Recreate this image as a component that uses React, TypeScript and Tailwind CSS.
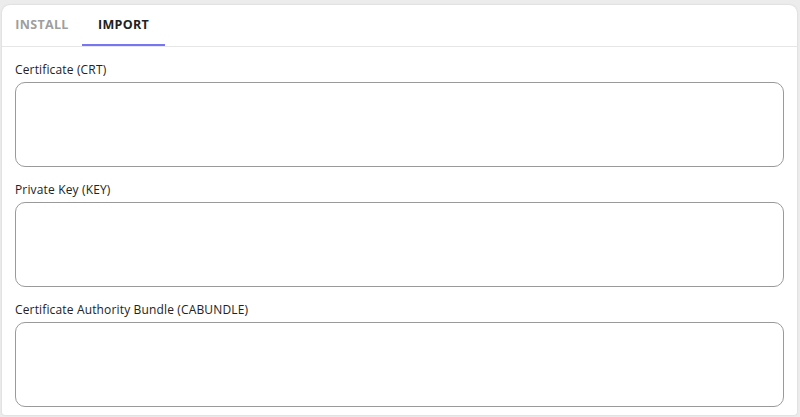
import React from "react";

const fields = [
  "Certificate (CRT)",
  "Private Key (KEY)",
  "Certificate Authority Bundle (CABUNDLE)",
];

const App: React.FC = () => {
  const [tab, setTab] = React.useState("import");

  return (
    <div
      className="w-[800px] h-[417px] bg-[#ececec] pt-[5px] pl-[2px] pr-[3px] pb-[2px]"
      style={{ fontFamily: "'Open Sans', 'Noto Sans', sans-serif" }}
    >
      <div className="h-full bg-white rounded-t-[8px] rounded-b-[3px] shadow-[0_0_2px_rgba(0,0,0,0.15)] flex flex-col overflow-hidden">
        {/* Tabs */}
        <div className="flex shrink-0 border-b border-[#e6e6e6] h-[42px] items-stretch">
          <button
            onClick={() => setTab("install")}
            className={`w-[80px] text-[12.5px] font-bold tracking-[0.3px] pt-[1px] border-b-2 ${
              tab === "install" ? "text-[#222] border-[#7676f0]" : "text-[#9e9e9e] border-transparent"
            }`}
          >
            INSTALL
          </button>
          <button
            onClick={() => setTab("import")}
            className={`w-[83px] text-[12.5px] font-bold tracking-[0.3px] pt-[1px] border-b-2 ${
              tab === "import" ? "text-[#222] border-[#7676f0]" : "text-[#9e9e9e] border-transparent"
            }`}
          >
            IMPORT
          </button>
        </div>

        {/* Fields */}
        <div className="flex flex-col pl-[13px] pr-[13px] pt-[14px] gap-[14px]">
          {fields.map((label) => (
            <div key={label} className="flex flex-col">
              <label className="text-[12px] text-[#222] leading-[18px] tracking-[0.15px] mb-[3px]">{label}</label>
              <textarea className="h-[85px] w-full resize-none rounded-[10px] border border-[#9a9a9a] outline-none px-3 py-2 text-[13px]" />
            </div>
          ))}
        </div>
      </div>
    </div>
  );
};

export default App;
